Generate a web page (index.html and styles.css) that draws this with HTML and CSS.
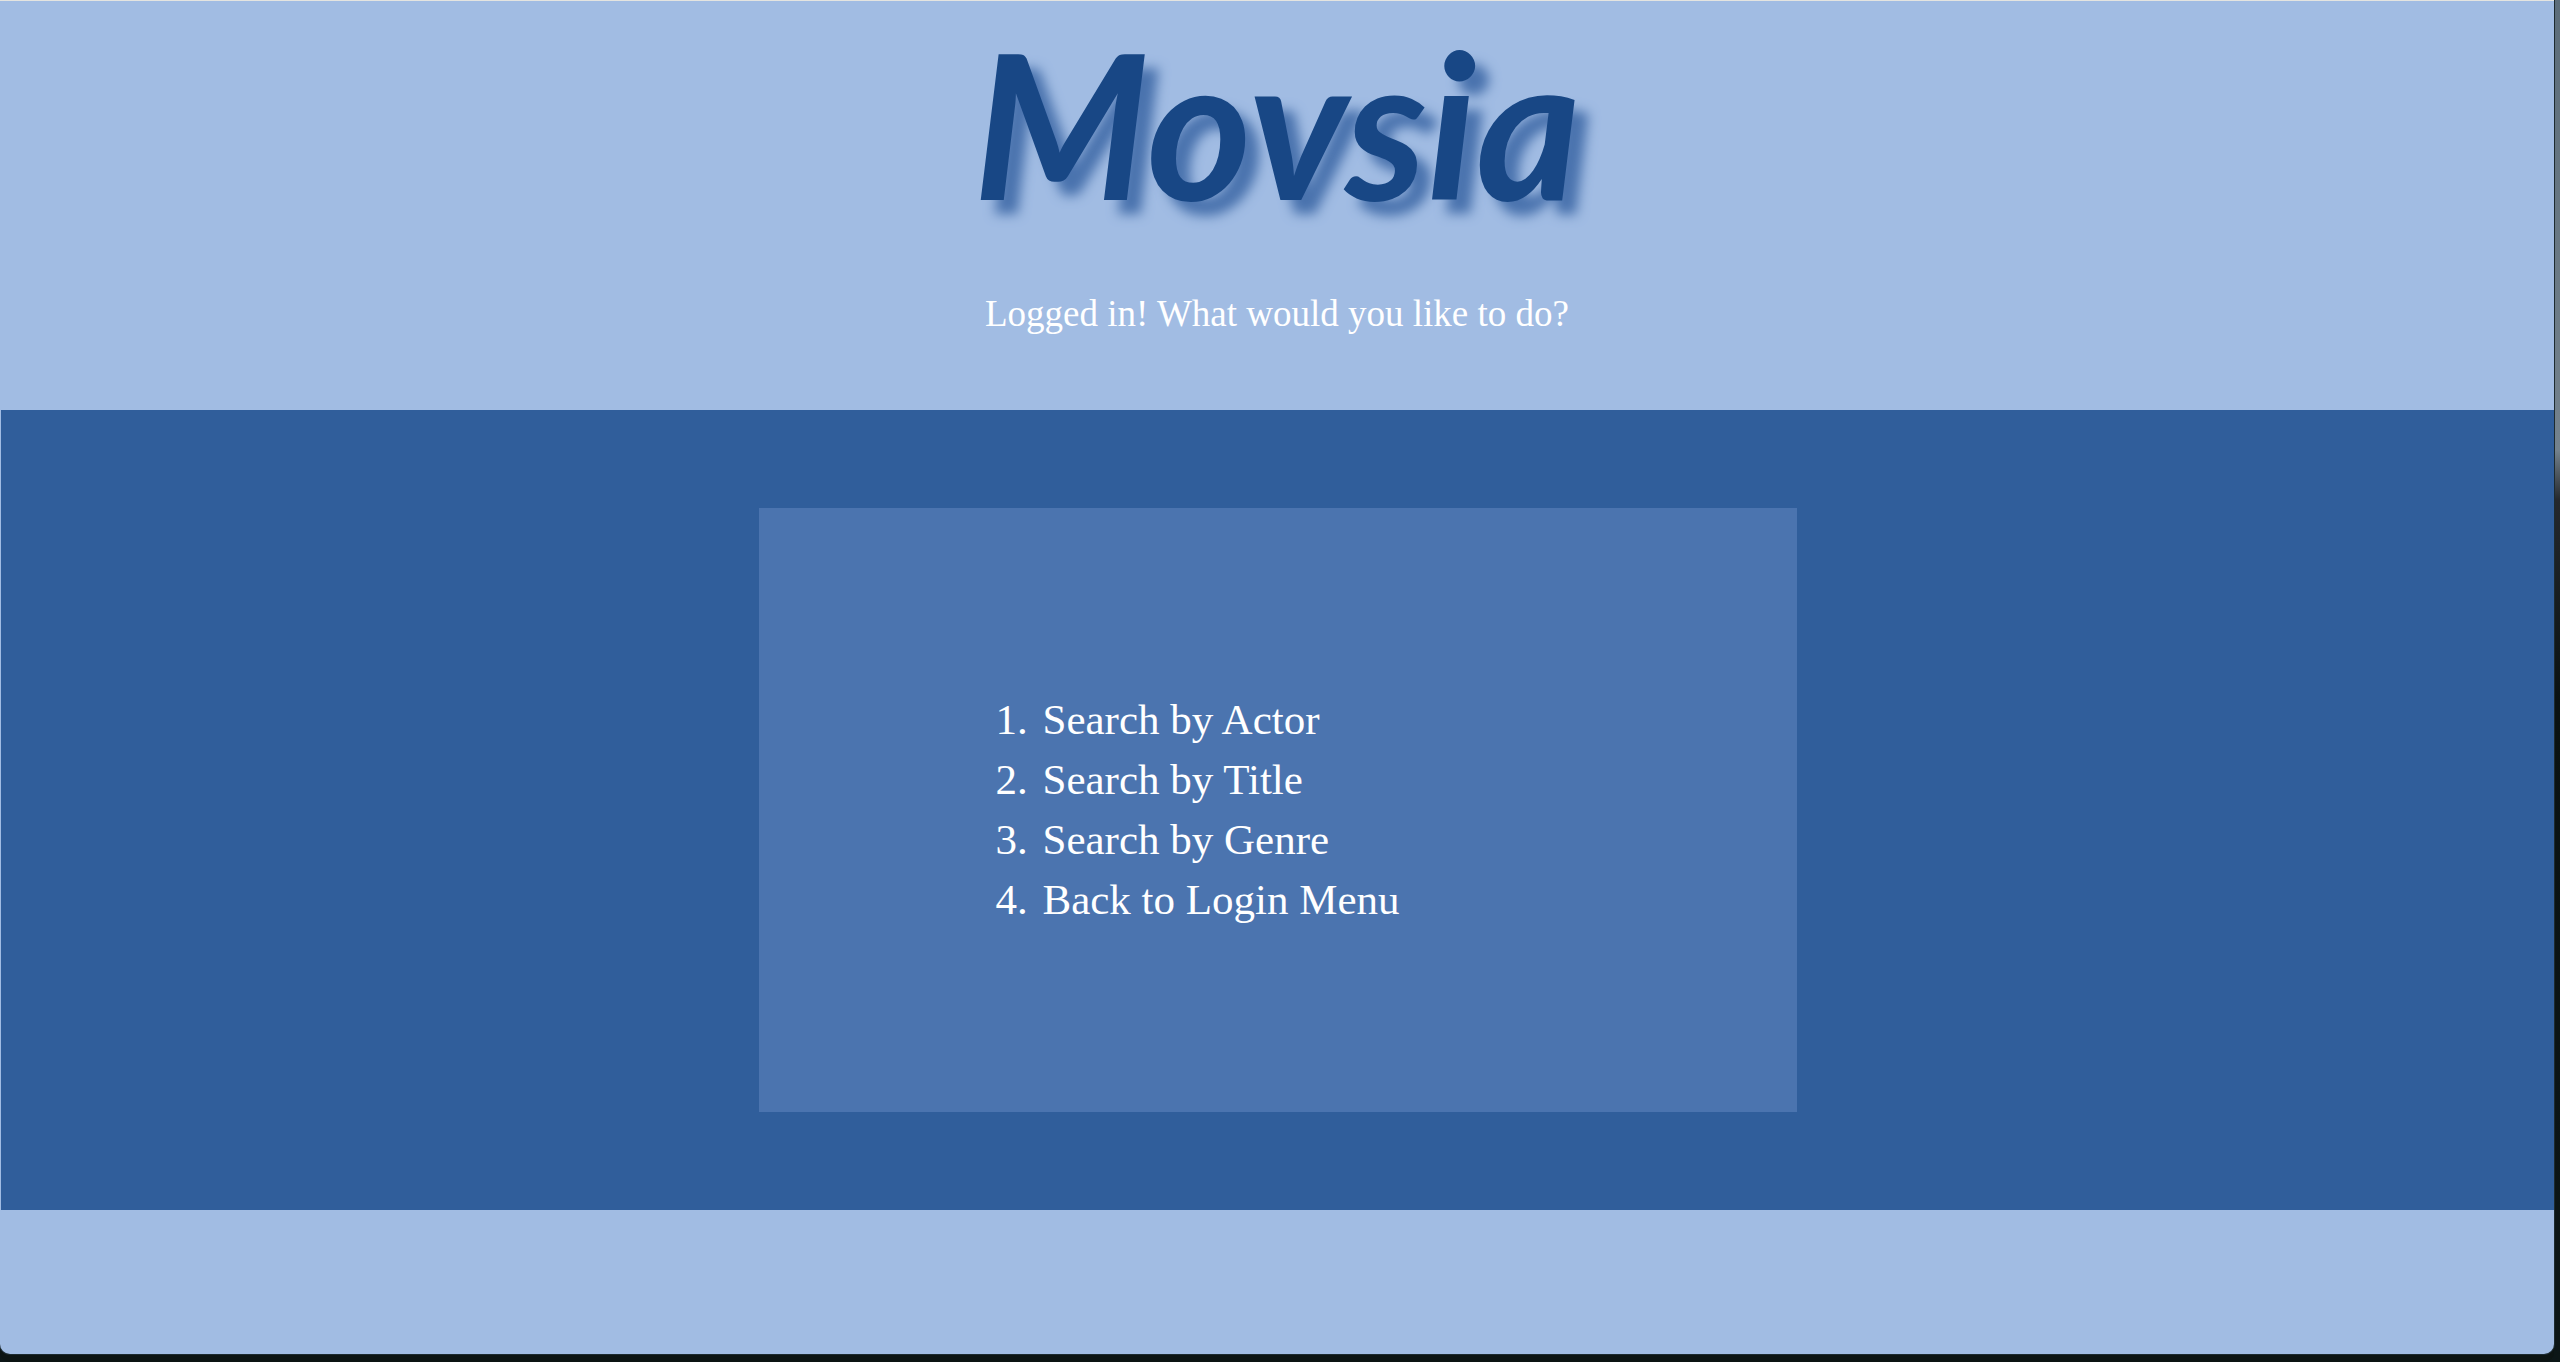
FILE: index.html
```html
<!DOCTYPE html>
<html lang="en">
<head>
<meta charset="utf-8">
<title>Movsia</title>
<link rel="stylesheet" href="styles.css">
</head>
<body>
<div class="window">
  <header class="masthead">
    <h1 class="logo">Movsia</h1>
    <p class="prompt">Logged in! What would you like to do?</p>
  </header>
  <main class="band">
    <nav class="panel" aria-label="Menu">
      <ol class="menu">
        <li><a href="#actor">Search by Actor</a></li>
        <li><a href="#title">Search by Title</a></li>
        <li><a href="#genre">Search by Genre</a></li>
        <li><a href="#login">Back to Login Menu</a></li>
      </ol>
    </nav>
  </main>
</div>
</body>
</html>
```
FILE: styles.css
```css
* {
  box-sizing: border-box;
}

body {
  display: flex;
  min-height: 100vh;
  margin: 0;
  padding: 0 6px 8px 0;
  background: linear-gradient(#5c6d7a 0, #74828d 450px, #24282d 500px, #0a1212 700px, #0c1617 100%);
  font-family: "Liberation Serif", "Times New Roman", serif;
  color: #fff;
}

.window {
  flex: 1;
  border-top: 1px solid #e4e4e0;
  border-radius: 0 0 10px 10px;
  background: #a1bce3;
  box-shadow: 0 0 0 1px #1c2a30, 0 8px 0 #0c1413;
}

.masthead {
  height: 409px;
  text-align: center;
}

.logo {
  margin: 0;
  padding-top: 2px;
  font: italic 700 201px/240px Lato, sans-serif;
  color: #184785;
  text-shadow: 14px 14px 12px #4a73ae;
}

.prompt {
  margin: 46px 0 0;
  font-size: 37px;
  line-height: 50px;
}

.band {
  display: flex;
  justify-content: center;
  margin-left: 1px;
  padding: 98px 0;
  background: #305e9b;
}

.panel {
  width: 1038px;
  max-width: 100%;
  padding: 182px 200px;
  background: #4b74af;
}

.menu {
  margin: 0;
  padding-left: 80px;
  font-size: 43px;
  line-height: 60px;
}

.menu li {
  padding-left: 4px;
}

.menu a {
  color: inherit;
  text-decoration: none;
}
```
